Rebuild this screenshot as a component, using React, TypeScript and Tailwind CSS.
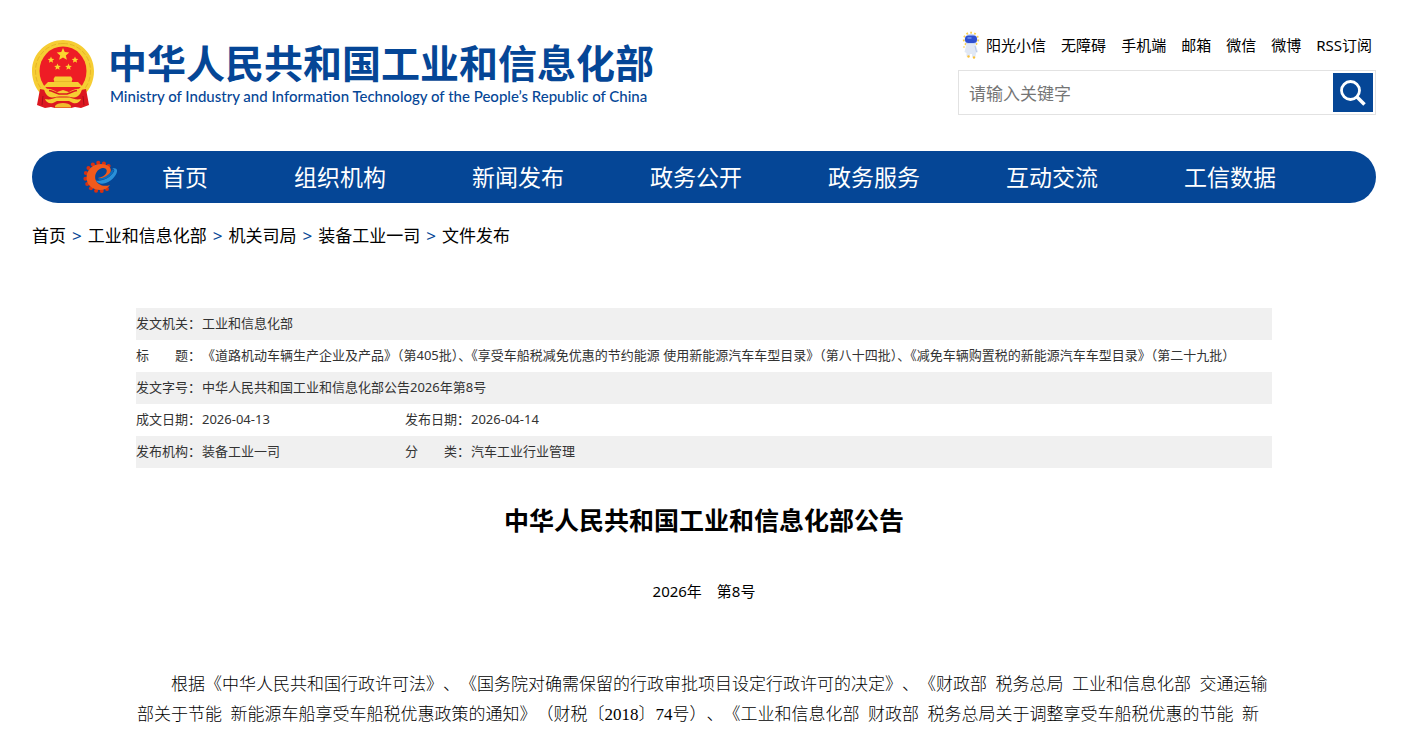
import React from 'react';

const topLinks = ['无障碍', '手机端', '邮箱', '微信', '微博', 'RSS订阅'];
const navItems = ['首页', '组织机构', '新闻发布', '政务公开', '政务服务', '互动交流', '工信数据'];
const crumbs = ['首页', '工业和信息化部', '机关司局', '装备工业一司', '文件发布'];

const metaRows = [
    [['发文机关：', '工业和信息化部']],
    [['标　　题：', '《道路机动车辆生产企业及产品》（第405批）、《享受车船税减免优惠的节约能源 使用新能源汽车车型目录》（第八十四批）、《减免车辆购置税的新能源汽车车型目录》（第二十九批）']],
    [['发文字号：', '中华人民共和国工业和信息化部公告2026年第8号']],
    [['成文日期：', '2026-04-13'], ['发布日期：', '2026-04-14']],
    [['发布机构：', '装备工业一司'], ['分　　类：', '汽车工业行业管理']],
];

function Star({ x, y, r }: { x: number; y: number; r: number }) {
    const points = Array.from({ length: 10 }, (_, i) => {
        const a = (i * Math.PI) / 5 - Math.PI / 2;
        const d = i % 2 ? r * 0.45 : r;
        return `${(x + d * Math.cos(a)).toFixed(2)},${(y + d * Math.sin(a)).toFixed(2)}`;
    }).join(' ');
    return <polygon points={points} fill="#fbd52f" />;
}

function Emblem() {
    return (
        <svg viewBox="0 0 62 68" className="h-[68px] w-[62px] shrink-0" aria-hidden="true">
            <path d="M31 0C47 0 62 13 62 31c0 10-4 18-9 23L47 61H15L9 54C4 49 0 41 0 31 0 13 15 0 31 0z" fill="#f6cd33" />
            <path d="M31 3.500C46 3.500 58.500 15 58.500 31c0 9-3.500 16-8.500 21M31 3.500C16 3.500 3.500 15 3.500 31c0 9 3.500 16 8.500 21" fill="none" stroke="#e6b428" strokeWidth="1" strokeDasharray="5 2" />
            <ellipse cx="31" cy="31" rx="23.5" ry="24.5" fill="#ee1c25" />
            <Star x={31} y={14.5} r={6.6} />
            <Star x={19} y={20} r={3.5} />
            <Star x={43} y={20} r={3.5} />
            <Star x={25.5} y={27} r={3.5} />
            <Star x={36.5} y={27} r={3.5} />
            <path d="M23 36.500h16l1.500 2.500-1 3H46l5 5H11l5-5h6.500l-1-3z" fill="#f6cd33" />
            <path d="M22 41.500h18" stroke="#e3ae24" strokeWidth=".7" />
            <path d="M8 49l10 2h26l10-2 3 16-8 3-6-1-4 1H23l-4-1-6 1-8-3z" fill="#dc1720" />
            <path d="M12 49c6-1 9 1 13 3l6-2 6 2c4-2 7-4 13-3-1 5-4 8-8 8.500-3-.5-6-1-11-1s-8 .5-11 1c-4-.5-7-3.500-8-8.500z" fill="#f6cd33" />
            <path d="M17 50.500c4 .5 6 2.500 10 3.500h8c4-1 6-3 10-3.500" fill="none" stroke="#dc1720" strokeWidth="1.500" />
            <path d="M13 59c4 1 8 0 11-1.500h14c3 1.500 7 2.500 11 1.500-1 3-4 5-8 4l-4-2H25l-4 2c-4 1-7-1-8-4z" fill="#f6cd33" />
            <path d="M23 66c2-4 14-4 16 0v1.500H23z" fill="#f0bd2e" />
            <path d="M11 56l-1 9M51 56l1 9" stroke="#a80f18" strokeWidth="1" />
        </svg>
    );
}

function Mascot() {
    return (
        <svg viewBox="0 0 18 28" className="h-7 w-[18px] shrink-0" aria-hidden="true">
            <ellipse cx="9" cy="8.5" rx="7.2" ry="6.8" fill="none" stroke="#f9cf4c" strokeWidth="2" strokeDasharray="1.8 2.2" />
            <ellipse cx="9" cy="8.5" rx="6.5" ry="5.8" fill="#c9d8f5" />
            <path d="M4.500 13h9l2.500 8-2 1-.5 4h-3.500v-3H8v2.500H4.500V22L2.500 21z" fill="#e1e8f5" />
            <rect x="3" y="4.500" width="12" height="7.500" rx="3.500" fill="#2f4fd0" />
            <path d="M5.500 7h4" stroke="#6f95f0" strokeWidth="1.500" />
            <path d="M13 15l1.500 6" stroke="#b9c9e8" strokeWidth="1" />
            <circle cx="6.500" cy="25.500" r="1.200" fill="#f9c13a" />
            <circle cx="12" cy="26.500" r="1.200" fill="#f9c13a" />
            <circle cx="2" cy="16" r="0.9" fill="#f9dc7c" />
        </svg>
    );
}

function GearLogo() {
    const teeth = [-50, -72, -95, -118, -141, -164, -187, -210, -233, -256, -279, -302];
    return (
        <svg viewBox="0 0 36 34" className="h-[34px] w-9 shrink-0" aria-hidden="true">
            {teeth.map((deg) => {
                const a = (deg * Math.PI) / 180;
                return <circle key={deg} cx={16.5 + 14.2 * Math.cos(a)} cy={17 + 14.2 * Math.sin(a)} r="2" fill="#d9300f" />;
            })}
            <path d="M18 4C9.500 4 3.500 10 3.500 17.500 3.500 25 9.500 30 17 30c4.500 0 8-2 10-5-4 1.500-8 1-11-1-3.500-2.500-4.500-6-3.500-9.500C14 10 17.500 7.800 20.500 8c3 .2 4 2.500 2.800 5-1.300 2.500-4.300 4.200-8.300 5 6 1 12-2 12.800-7C28.500 7 24 4 18 4z" fill="#f15a1b" />
            <path d="M13 20.500c6 1.300 14-2.500 18-9 .8-1.500 0-2.500-1.800-2.800 3-1 5.500.2 4.800 3C33 16.500 27.500 21.500 22 23.300c-4 1-7.500 0-9-2.800z" fill="#2a90d8" />
            <path d="M15 18.500c5 0 11-3 14-8.500.6-.8 1.800-.6 2 .5-2 5-8 9.500-13.500 9.300-1.200 0-2-.5-2.500-1.300z" fill="#0f6dbb" />
        </svg>
    );
}

function Header() {
    return (
        <header className="flex items-start justify-between pt-[30px]">
            <a href="#" className="mt-2.5 flex items-start gap-[14px] text-[#054696]" aria-label="中华人民共和国工业和信息化部">
                <Emblem />
                <div className="whitespace-nowrap">
                    <div className="text-[39px] leading-[46px] font-bold">中华人民共和国工业和信息化部</div>
                    <div className="pl-0.5 font-[Lato,sans-serif] text-[15px] leading-5 font-medium">Ministry of Industry and Information Technology of the People’s Republic of China</div>
                </div>
            </a>
            <div className="w-[418px]">
                <div className="flex h-[30px] items-center justify-end gap-[15px] pr-1 text-[15px] text-black">
                    <a href="#" className="flex items-center gap-1.5">
                        <Mascot />
                        阳光小信
                    </a>
                    {topLinks.map((text) => (
                        <a key={text} href="#">{text}</a>
                    ))}
                </div>
                <form className="mt-2.5 flex h-[45px] items-center border border-[#e2e2e2] pr-0.5">
                    <input
                        type="text"
                        aria-label="请输入关键字"
                        placeholder="请输入关键字"
                        className="h-full min-w-0 flex-1 px-2.5 pt-0.5 text-[17px] outline-none placeholder:text-[#757575]"
                    />
                    <button type="button" aria-label="搜索" className="flex h-[39px] w-10 items-center justify-center bg-[#054696]">
                        <svg viewBox="0 0 26 26" className="h-[26px] w-[26px]" fill="none" stroke="#fff" aria-hidden="true">
                            <circle cx="10.500" cy="10.500" r="9" strokeWidth="2.800" />
                            <path d="M17 17l7.500 7.500" strokeWidth="3.500" />
                        </svg>
                    </button>
                </form>
            </div>
        </header>
    );
}

export default function App() {
    return (
        <div className="bg-white pr-[26px] pl-8 font-['Noto_Sans','Noto_Sans_CJK_SC',sans-serif] text-black">
            <Header />

            <nav className="mt-9 flex h-[52px] items-center rounded-full bg-[#054696] pl-[51px] text-white">
                <GearLogo />
                <div className="ml-[43px] flex gap-[86px] text-[23px] whitespace-nowrap">
                    {navItems.map((item) => (
                        <a key={item} href="#">{item}</a>
                    ))}
                </div>
            </nav>

            <div className="mt-5 flex items-center gap-1.5 text-[17px] leading-[26px]">
                {crumbs.map((crumb, i) => (
                    <React.Fragment key={crumb}>
                        {i > 0 && <span className="text-[#054696]">&gt;</span>}
                        <a href="#">{crumb}</a>
                    </React.Fragment>
                ))}
            </div>

            <main className="mx-[104px] mt-[59px]">
                <table className="w-full table-fixed text-left text-[13px] text-[#333]">
                    <colgroup>
                        <col className="w-[66px]" />
                        <col className="w-[203px]" />
                        <col className="w-[66px]" />
                        <col />
                    </colgroup>
                    <tbody>
                        {metaRows.map((row) => (
                            <tr key={row[0][0]} className="h-8 odd:bg-[#f0f0f0]">
                                {row.map(([label, value]) => (
                                    <React.Fragment key={label}>
                                        <th scope="row" className="p-0 font-normal whitespace-nowrap">{label}</th>
                                        <td colSpan={row.length === 1 ? 3 : 1} className="p-0 whitespace-nowrap">{value}</td>
                                    </React.Fragment>
                                ))}
                            </tr>
                        ))}
                    </tbody>
                </table>

                <h1 className="mt-8 text-center text-[25px] leading-10 font-bold">中华人民共和国工业和信息化部公告</h1>
                <p className="mt-[39px] text-center text-[15px] leading-6">2026年　第8号</p>

                <p className="mt-[67px] pl-px indent-[34px] font-['Liberation_Serif','Noto_Sans_CJK_SC',serif] text-[17px] leading-[30px] font-light [text-spacing-trim:space-all]">
                    根据《中华人民共和国行政许可法》、《国务院对确需保留的行政审批项目设定行政许可的决定》、《财政部&ensp;税务总局&ensp;工业和信息化部&ensp;交通运输部关于节能&ensp;新能源车船享受车船税优惠政策的通知》（财税〔2018〕74号）、《工业和信息化部&ensp;财政部&ensp;税务总局关于调整享受车船税优惠的节能&ensp;新
                </p>
            </main>
        </div>
    );
}
